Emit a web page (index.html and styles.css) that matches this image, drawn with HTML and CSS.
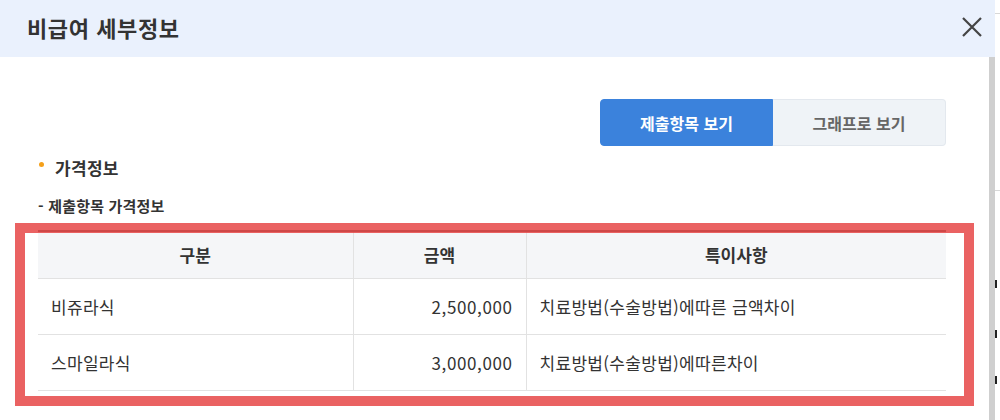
FILE: index.html
```html
<!DOCTYPE html>
<html lang="ko">
<head>
<meta charset="utf-8">
<link rel="stylesheet" href="styles.css">
</head>
<body>
<div class="page">
  <div class="modal">
    <div class="modal-header">
      <h1 class="title">비급여 세부정보</h1>
      <button class="close" aria-label="닫기">
        <svg width="22" height="22" viewBox="0 0 22 22"><path d="M2 2 L20 20 M20 2 L2 20" stroke="#444" stroke-width="2.2" fill="none"/></svg>
      </button>
    </div>
    <div class="modal-body">
      <div class="content">
        <div class="tabs">
          <button class="tab active">제출항목 보기</button>
          <button class="tab">그래프로 보기</button>
        </div>
        <h2 class="section-title"><span class="dot"></span>가격정보</h2>
        <p class="sub-title">- 제출항목 가격정보</p>
        <div class="table-wrap">
          <table class="price-table">
            <colgroup><col class="c1"><col class="c2"><col class="c3"></colgroup>
            <thead>
              <tr><th>구분</th><th>금액</th><th>특이사항</th></tr>
            </thead>
            <tbody>
              <tr><td>비쥬라식</td><td class="num">2,500,000</td><td>치료방법(수술방법)에따른 금액차이</td></tr>
              <tr><td>스마일라식</td><td class="num">3,000,000</td><td>치료방법(수술방법)에따른차이</td></tr>
            </tbody>
          </table>
          <div class="highlight"></div>
        </div>
      </div>
      <div class="scrollbar"></div>
    </div>
  </div>
  <div class="backdrop">
    <span class="bd-line l1"></span>
    <span class="bd-line l2"></span>
    <span class="bd-mark m1"></span>
    <span class="bd-mark m2"></span>
    <span class="bd-mark m3"></span>
  </div>
</div>
</body>
</html>
```
FILE: styles.css
```css
* { box-sizing: border-box; }
html, body { margin: 0; padding: 0; background: #fff; }
body { font-family: "Noto Sans CJK KR", "Noto Sans", sans-serif; color: #333; }

.page { display: flex; width: 1000px; height: 420px; overflow: hidden; }

.modal { width: 995px; height: 420px; display: flex; flex-direction: column; background: #fff; }

.modal-header {
  height: 57px; flex: none; background: #eaf1fd;
  display: flex; align-items: center; justify-content: space-between;
  padding: 0 12px 0 27px;
}
.title { margin: 0; font-size: 22px; font-weight: 700; color: #333; letter-spacing: 0.6px; line-height: 1; position: relative; top: -2px; }
.close { border: 0; background: none; padding: 0; width: 22px; height: 22px; display: flex; position: relative; top: -2px; }

.modal-body { flex: 1; display: flex; min-height: 0; }
.content { flex: 1; padding: 42px 43px 0 38px; }
.scrollbar { width: 6px; background: #cfcfcf; flex: none; }

.tabs { display: flex; justify-content: flex-end; }
.tab {
  width: 173px; height: 47px; font-family: inherit; font-size: 16px; font-weight: 700;
  border: 1px solid #e3e8ee; background: #eff3f7; color: #666; padding: 0;
}
.tab.active { background: #3b82dc; border-color: #3b82dc; color: #fff; border-radius: 4px 0 0 4px; }
.tab:last-child { border-radius: 0 4px 4px 0; border-left: 0; }

.section-title { margin: 10px 0 0 1px; font-size: 17px; font-weight: 700; display: flex; align-items: center; height: 22px; letter-spacing: 0.3px; }
.dot { width: 5px; height: 5px; border-radius: 50%; background: #f5a01a; margin-right: 11px; position: relative; top: -3px; }

.sub-title { margin: 19px 0 0; font-size: 15px; font-weight: 700; height: 18px; line-height: 18px; letter-spacing: 0.2px; }

.table-wrap { position: relative; margin-top: 15px; }
.price-table { width: 908px; border-collapse: collapse; table-layout: fixed; border-top: 2px solid #4a4a4a; }
.c1 { width: 315px; } .c2 { width: 173px; } .c3 { width: 420px; }
.price-table th {
  height: 47px; background: #f5f6f8; font-size: 17px; font-weight: 700; color: #333;
  border-bottom: 1px solid #e2e2e2; border-left: 1px solid #e2e2e2; padding: 0;
}
.price-table td {
  height: 56px; font-size: 17px; color: #333; padding: 0 13px; letter-spacing: 0.3px;
  border-bottom: 1px solid #e2e2e2; border-left: 1px solid #e2e2e2;
}
.price-table th:first-child, .price-table td:first-child { border-left: 0; }
.price-table td.num { text-align: right; letter-spacing: 0.6px; }

.highlight {
  position: absolute; left: -23px; top: -7px; right: -28px; bottom: -15px;
  border: 10px solid rgba(230, 70, 70, 0.85);
  pointer-events: none;
}

.backdrop { flex: 1; position: relative; background: #fff; }
.bd-line { position: absolute; left: 0; right: 0; height: 1px; background: #d8d8d8; }
.l1 { top: 13px; } .l2 { top: 190px; }
.bd-mark { position: absolute; left: 0; width: 2px; height: 8px; background: #222; }
.m1 { top: 280px; } .m2 { top: 330px; } .m3 { top: 376px; }
```
